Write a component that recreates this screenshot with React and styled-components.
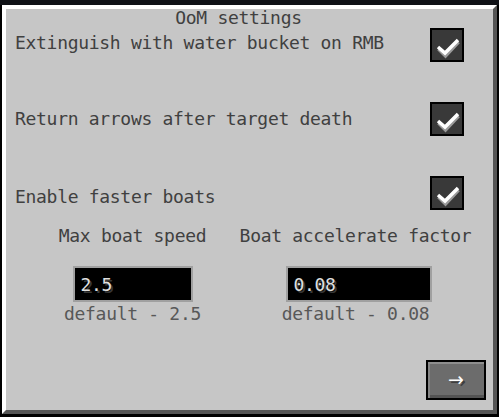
import React from "react";
import styled, { createGlobalStyle } from "styled-components";

const Global = createGlobalStyle`
  html, body {
    margin: 0;
    padding: 0;
    background: #0c0d11;
  }
  body {
    width: 499px;
    height: 417px;
    overflow: hidden;
    font-family: "DejaVu Sans Mono", "Liberation Mono", monospace;
  }
`;

const Screen = styled.div`
  width: 499px;
  height: 417px;
  padding: 5px 0 0 2px;
  box-sizing: border-box;
  background: linear-gradient(#0f1116 0 5px, #000 5px);
`;

const Panel = styled.div`
  width: 495px;
  height: 409px;
  box-sizing: border-box;
  background: #c6c6c6;
  border-style: solid;
  border-width: 4px;
  border-color: #ffffff #555555 #555555 #ffffff;
  display: flex;
  flex-direction: column;
`;

const Text = styled.span`
  font-family: "DejaVu Sans Mono", "Liberation Mono", monospace;
  font-size: 18px;
  line-height: 18px;
  letter-spacing: ${(p) => p.$track ?? -0.3}px;
  color: ${(p) => p.$tone ?? "#404040"};
  white-space: nowrap;
`;

const Title = styled(Text)`
  display: block;
  text-align: center;
  padding-right: 22px;
`;

const Options = styled.div`
  margin-top: 1px;
  padding: 0 29px 0 9px;
  display: flex;
  flex-direction: column;
  gap: 40px;
`;

const Row = styled.div`
  display: flex;
  justify-content: space-between;
  align-items: flex-start;
  height: 34px;
`;

const RowLabel = styled(Text)`
  margin-top: ${(p) => p.$drop}px;
`;

const Box = styled.div`
  width: 34px;
  height: 34px;
  box-sizing: border-box;
  border: 2px solid #000;
  background: #393939;
  display: flex;
`;

const Fields = styled.div`
  margin: 17px 0 0 15px;
  display: grid;
  grid-template-columns: 223px 223px;
`;

const Field = styled.div`
  display: flex;
  flex-direction: column;
  align-items: center;
`;

const NumberInput = styled.input`
  margin: 21px 0 0 ${(p) => p.$nudge}px;
  width: ${(p) => p.$w}px;
  height: 36px;
  box-sizing: border-box;
  border: 2px solid #a0a0a0;
  background: #000;
  outline: none;
  padding: 0 6px;
  font-family: "DejaVu Sans Mono", "Liberation Mono", monospace;
  font-size: 18px;
  letter-spacing: -0.3px;
  color: #e0e0e0;
  text-shadow: 2px 2px 0 #383838;
`;

const Hint = styled(Text)`
  margin-top: 3px;
`;

const Footer = styled.div`
  margin-top: auto;
  padding: 0 7px 10px 0;
  display: flex;
  justify-content: flex-end;
`;

const NextButton = styled.button`
  width: 60px;
  height: 40px;
  box-sizing: border-box;
  border: 2px solid #000;
  background: #6c6c6c;
  box-shadow: inset 0 2px 0 #8e8e8e, inset 2px 0 0 #858585,
    inset 0 -3px 0 #535353;
  padding: 0 0 2px 0;
  font-family: "DejaVu Sans", "Liberation Sans", sans-serif;
  font-size: 19px;
  line-height: 19px;
  color: #fff;
  text-shadow: 2px 2px 0 #3e3e3e;
  cursor: pointer;
`;

const Check = () => (
  <svg width="30" height="30" viewBox="0 0 30 30">
    <polyline
      points="6,18 13,25 26,11"
      fill="none"
      stroke="#9a9a9a"
      strokeWidth="3.5"
      transform="translate(0.5,1)"
    />
    <polyline
      points="6,17 13,23 26,10"
      fill="none"
      stroke="#ffffff"
      strokeWidth="3.5"
    />
  </svg>
);

const options = [
  { label: "Extinguish with water bucket on RMB", drop: 6 },
  { label: "Return arrows after target death", drop: 8 },
  { label: "Enable faster boats", drop: 12 },
];

const fields = [
  { label: "Max boat speed", value: "2.5", w: 120, nudge: 0, hint: "default - 2.5" },
  {
    label: "Boat accelerate factor",
    value: "0.08",
    w: 146,
    nudge: 6,
    hint: "default - 0.08",
  },
];

export default function App() {
  return (
    <>
      <Global />
      <Screen>
        <Panel>
          <Title>OoM settings</Title>
          <Options>
            {options.map((o) => (
              <Row key={o.label}>
                <RowLabel $drop={o.drop}>{o.label}</RowLabel>
                <Box>
                  <Check />
                </Box>
              </Row>
            ))}
          </Options>
          <Fields>
            {fields.map((f) => (
              <Field key={f.label}>
                <Text>{f.label}</Text>
                <NumberInput $w={f.w} $nudge={f.nudge} defaultValue={f.value} />
                <Hint $tone="#585858">{f.hint}</Hint>
              </Field>
            ))}
          </Fields>
          <Footer>
            <NextButton>→</NextButton>
          </Footer>
        </Panel>
      </Screen>
    </>
  );
}
